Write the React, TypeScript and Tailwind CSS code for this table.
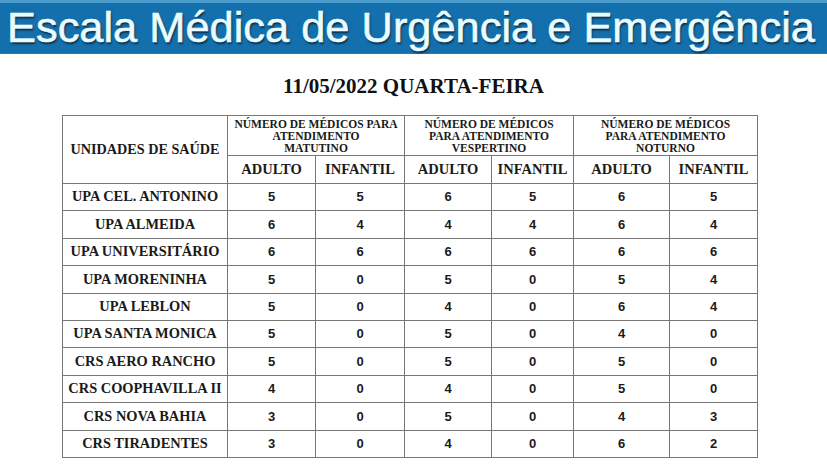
import React from "react";

const rows: [string, number[]][] = [
  ["UPA CEL. ANTONINO", [5, 5, 6, 5, 6, 5]],
  ["UPA ALMEIDA", [6, 4, 4, 4, 6, 4]],
  ["UPA UNIVERSITÁRIO", [6, 6, 6, 6, 6, 6]],
  ["UPA MORENINHA", [5, 0, 5, 0, 5, 4]],
  ["UPA LEBLON", [5, 0, 4, 0, 6, 4]],
  ["UPA SANTA MONICA", [5, 0, 5, 0, 4, 0]],
  ["CRS AERO RANCHO", [5, 0, 5, 0, 5, 0]],
  ["CRS COOPHAVILLA II", [4, 0, 4, 0, 5, 0]],
  ["CRS NOVA BAHIA", [3, 0, 5, 0, 4, 3]],
  ["CRS TIRADENTES", [3, 0, 4, 0, 6, 2]],
];

const serif = { fontFamily: '"Liberation Serif", "Times New Roman", serif' };

export default function App() {
  return (
    <div className="w-[827px] h-[466px] bg-white overflow-hidden">
      <div className="h-[54px] bg-[#1470ad] border-t-[3px] border-[#4a9ccc] border-b border-b-[#5a6a78] flex items-center pl-[7px]">
        <span
          className="text-[43.4px] leading-none text-[#eafcff] whitespace-nowrap"
          style={{
            fontFamily: '"Liberation Sans", Arial, sans-serif',
            textShadow: "1px 2px 2px #0b2a44",
            WebkitTextStroke: "0.6px #eafcff",
          }}
        >
          Escala Médica de Urgência e Emergência
        </span>
      </div>
      <div className="h-[61px] flex items-center justify-center pt-[4px]">
        <span className="text-[21px] font-bold text-[#111]" style={serif}>
          11/05/2022 QUARTA-FEIRA
        </span>
      </div>
      <div className="pl-[62px]">
        <table
          className="border-collapse table-fixed border border-[#666] text-[#1a1a1a]"
          style={serif}
        >
          <colgroup>
            <col className="w-[165px]" />
            <col className="w-[88px]" />
            <col className="w-[89px]" />
            <col className="w-[87px]" />
            <col className="w-[82px]" />
            <col className="w-[96px]" />
            <col className="w-[88px]" />
          </colgroup>
          <thead>
            <tr className="h-[40px]">
              <th rowSpan={2} className="border border-[#777] font-bold text-[14.2px] text-center align-middle whitespace-nowrap">
                UNIDADES DE SAÚDE
              </th>
              <th colSpan={2} className="border border-[#777] font-bold text-[11.5px] leading-[12px] text-center align-middle whitespace-nowrap">
                NÚMERO DE MÉDICOS PARA<br />ATENDIMENTO<br />MATUTINO
              </th>
              <th colSpan={2} className="border border-[#777] font-bold text-[11.5px] leading-[12px] text-center align-middle whitespace-nowrap">
                NÚMERO DE MÉDICOS<br />PARA ATENDIMENTO<br />VESPERTINO
              </th>
              <th colSpan={2} className="border border-[#777] font-bold text-[11.5px] leading-[12px] text-center align-middle whitespace-nowrap">
                NÚMERO DE MÉDICOS<br />PARA ATENDIMENTO<br />NOTURNO
              </th>
            </tr>
            <tr className="h-[28px]">
              {["ADULTO", "INFANTIL", "ADULTO", "INFANTIL", "ADULTO", "INFANTIL"].map((t, i) => (
                <th key={i} className="border border-[#777] font-bold text-[14.5px] text-center align-middle">
                  {t}
                </th>
              ))}
            </tr>
          </thead>
          <tbody>
            {rows.map(([name, vals]) => (
              <tr key={name} className="h-[27.4px]">
                <td className="border border-[#777] font-bold text-[14.4px] text-center align-middle whitespace-nowrap">
                  {name}
                </td>
                {vals.map((v, i) => (
                  <td
                    key={i}
                    className="border border-[#777] font-bold text-[13px] text-center align-middle"
                    style={{ fontFamily: '"Liberation Sans", Arial, sans-serif' }}
                  >
                    {v}
                  </td>
                ))}
              </tr>
            ))}
          </tbody>
        </table>
      </div>
    </div>
  );
}
